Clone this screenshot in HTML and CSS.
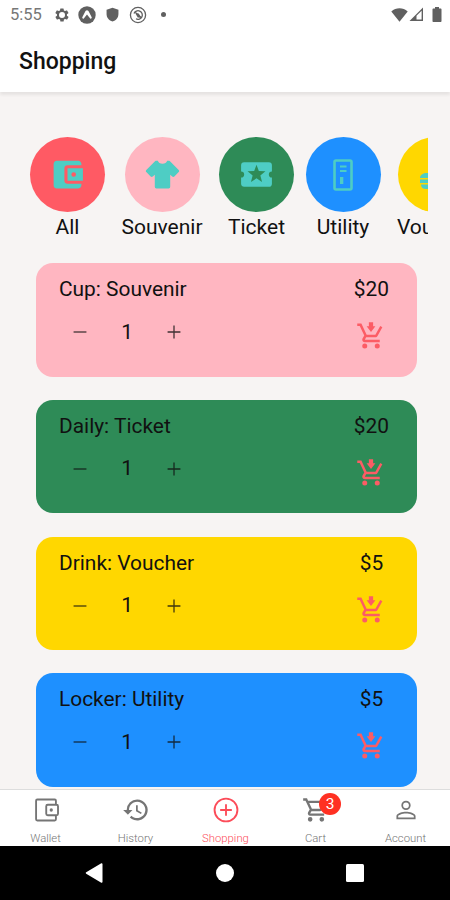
FILE: index.html
```html
<!DOCTYPE html>
<html lang="en">
<head>
    <meta charset="UTF-8">
    <meta name="viewport" content="width=device-width, initial-scale=1.0">
    <title>Shopping</title>
    <link rel="stylesheet" href="styles.css">
</head>
<body>

<svg class="symbols">
    <symbol id="cart-add" viewBox="0 0 24 24">
        <path d="M7 18a2 2 0 1 0 0 4 2 2 0 0 0 0-4zm10 0a2 2 0 1 0 0 4 2 2 0 0 0 0-4zM7.2 14.8v-.1l.9-1.7h7.4c.7 0 1.4-.4 1.700-1L21.1 5l-1.700-1-3.900 7h-7L4.300 2H1v2h2l3.600 7.600L5.200 14c-.1.300-.2.600-.2 1 0 1.100.9 2 2 2h12v-2H7.400c-.1 0-.2-.1-.2-.2zM10.300 1h3.400v3.200H15.500L12 8.700 8.500 4.200h1.800z"/>
    </symbol>
    <symbol id="minus" viewBox="0 0 24 24"><path d="M5 11.300h14v1.400H5z"/></symbol>
    <symbol id="plus" viewBox="0 0 24 24"><path d="M11.300 5h1.400v6.300H19v1.400h-6.300V19h-1.400v-6.300H5v-1.400h6.300z"/></symbol>
</svg>

<div class="screen">
    <div class="status">
        <span class="time">5:55</span>
        <svg class="gear" viewBox="0 0 24 24"><path d="M19.400 13a7.500 7.500 0 0 0 0-2l2.100-1.600c.2-.2.2-.4.1-.6l-2-3.500c-.1-.2-.4-.3-.6-.2l-2.500 1a7 7 0 0 0-1.700-1l-.4-2.600a.5.5 0 0 0-.5-.4h-4a.5.5 0 0 0-.5.4L9 5.100a7 7 0 0 0-1.700 1l-2.500-1c-.2-.1-.5 0-.6.200l-2 3.500c-.1.200-.1.400.1.600L4.500 11a8 8 0 0 0 0 2l-2.100 1.600c-.2.200-.2.400-.1.600l2 3.500c.1.200.4.300.6.200l2.500-1a7 7 0 0 0 1.700 1l.4 2.600c0 .2.200.4.500.4h4c.2 0 .5-.2.500-.4l.4-2.600a7 7 0 0 0 1.700-1l2.500 1c.2.100.5 0 .6-.2l2-3.500c.1-.2.1-.4-.1-.6zM12 16.500a4.500 4.500 0 1 1 0-9 4.500 4.500 0 0 1 0 9z"/></svg>
        <svg class="expo" viewBox="0 0 18 18"><circle cx="9" cy="9" r="8.700"/><path class="cut" d="M9 4.300c1 0 1.500.8 2 1.800l2.700 5.200c.3.800-.7 1.800-1.500 1.200L9 8.600l-3.200 3.900c-.8.600-1.800-.4-1.500-1.200L7 6.100c.5-1 1-1.800 2-1.800z"/></svg>
        <svg class="shield" viewBox="0 0 24 24"><path d="M12 1 2.500 4.500V11c0 6 4 10.600 9.500 12 5.500-1.400 9.500-6 9.500-12V4.500z"/></svg>
        <svg class="sync" viewBox="0 0 18 18"><circle class="ring" cx="9" cy="9" r="7.600"/><path class="ring" d="M5 7.500a4.300 4.300 0 1 1 2 5.300M6 6l6 5.500"/><path d="M6.500 7.500h3.300l2.400 4.300-3.500-.4z"/></svg>
        <span class="dot"></span>
        <svg class="wifi" viewBox="0 0 17 14"><path d="M.3 3.400C5-.7 12-.7 16.700 3.400L8.500 13.800z"/></svg>
        <svg class="signal" viewBox="0 0 15 15"><path d="M14 .5V14H.5z"/><path class="cut" d="M7.500 8.800 12.600 3.800v8.800H7.500z"/></svg>
        <svg class="battery" viewBox="0 0 10 15"><path d="M3 0h4v1.500h1.500c.6 0 1 .4 1 1V14c0 .6-.4 1-1 1h-7c-.6 0-1-.4-1-1V2.500c0-.6.4-1 1-1H3z"/></svg>
    </div>

    <header class="header">Shopping</header>

    <main class="content">
        <div class="categories">
            <div class="category">
                <div class="circle red"><svg viewBox="0 0 24 24"><path d="M21 18v1c0 1.100-.9 2-2 2H5a2 2 0 0 1-2-2V5c0-1.100.9-2 2-2h14c1.100 0 2 .9 2 2v1h-9a2 2 0 0 0-2 2v8c0 1.100.9 2 2 2zm-9-2h10V8H12zm4-2.500a1.500 1.500 0 1 1 0-3 1.500 1.500 0 0 1 0 3z"/></svg></div>
                <span>All</span>
            </div>
            <div class="category">
                <div class="circle pink"><svg viewBox="0 0 24 24"><path d="M16 21H8a1 1 0 0 1-1-1v-7.900l-1.300 1.200c-.4.400-1 .4-1.400 0L1.500 10.400c-.4-.4-.4-1 0-1.400L7.300 3.200c.2-.2.400-.2.700-.2h1c.3 1.200 1.500 2 3 2s2.700-.8 3-2h1c.3 0 .5 0 .7.200L22.500 9c.4.400.4 1 0 1.400l-2.800 2.900c-.4.400-1 .4-1.400 0L17 12.100V20a1 1 0 0 1-1 1z"/></svg></div>
                <span>Souvenir</span>
            </div>
            <div class="category">
                <div class="circle green"><svg viewBox="0 0 24 24"><path d="M20 12a2 2 0 0 1 2-2V6a2 2 0 0 0-2-2H4a2 2 0 0 0-2 2v4a2 2 0 0 1 0 4v4c0 1.100.9 2 2 2h16a2 2 0 0 0 2-2v-4a2 2 0 0 1-2-2zm-4.400 4.800L12 14.500l-3.600 2.300 1.100-4.200-3.300-2.700 4.300-.2L12 5.700l1.500 4 4.300.2-3.300 2.700z"/></svg></div>
                <span>Ticket</span>
            </div>
            <div class="category">
                <div class="circle blue"><svg class="locker" viewBox="0 0 20 32"><rect class="line" x="1.500" y="1.500" width="17" height="29" rx="1.500"/><path d="M7 6.500h6.500v2H7zM7 11h6.500v2H7zM7 18h3.300v7H7z"/></svg></div>
                <span>Utility</span>
            </div>
            <div class="category">
                <div class="circle yellow"><svg class="burger" viewBox="0 0 31 32"><path d="M0 19c0-3 3-5 7-5h17c4 0 7 2 7 5zM0 20.500h31v3.500H0zM1 25.500h29c0 3-2 4.500-5 4.500H6c-3 0-5-1.500-5-4.500z"/></svg></div>
                <span>Voucher</span>
            </div>
        </div>

        <div class="items">
            <div class="card pink">
                <div class="row"><span>Cup: Souvenir</span><span class="price">$20</span></div>
                <div class="row controls">
                    <div class="stepper"><svg><use href="#minus"/></svg><span>1</span><svg><use href="#plus"/></svg></div>
                    <svg class="add"><use href="#cart-add"/></svg>
                </div>
            </div>
            <div class="card green">
                <div class="row"><span>Daily: Ticket</span><span class="price">$20</span></div>
                <div class="row controls">
                    <div class="stepper"><svg><use href="#minus"/></svg><span>1</span><svg><use href="#plus"/></svg></div>
                    <svg class="add"><use href="#cart-add"/></svg>
                </div>
            </div>
            <div class="card yellow">
                <div class="row"><span>Drink: Voucher</span><span class="price">$5</span></div>
                <div class="row controls">
                    <div class="stepper"><svg><use href="#minus"/></svg><span>1</span><svg><use href="#plus"/></svg></div>
                    <svg class="add"><use href="#cart-add"/></svg>
                </div>
            </div>
            <div class="card blue">
                <div class="row"><span>Locker: Utility</span><span class="price">$5</span></div>
                <div class="row controls">
                    <div class="stepper"><svg><use href="#minus"/></svg><span>1</span><svg><use href="#plus"/></svg></div>
                    <svg class="add"><use href="#cart-add"/></svg>
                </div>
            </div>
        </div>
    </main>

    <nav class="tabs">
        <div class="tab">
            <svg viewBox="0 0 24 24"><path class="line" d="M20.500 7V4c0-.6-.4-1-1-1h-15c-.6 0-1 .4-1 1v16c0 .6.4 1 1 1h15c.6 0 1-.4 1-1v-3M13.500 7.500h7.500c.8 0 1.300.5 1.300 1.300v6.400c0 .8-.5 1.300-1.300 1.300h-7.500c-.8 0-1.300-.5-1.300-1.300V8.800c0-.8.5-1.300 1.300-1.300z"/><circle cx="16.500" cy="12" r="1.400"/></svg>
            <span>Wallet</span>
        </div>
        <div class="tab">
            <svg viewBox="0 0 24 24"><path d="M13 3a9 9 0 0 0-9 9H1l3.900 3.900.1.100L9 12H6a7 7 0 1 1 2.100 4.900l-1.400 1.500A9 9 0 1 0 13 3zm-1 5v5l4.200 2.500.8-1.200-3.500-2.100V8z"/></svg>
            <span>History</span>
        </div>
        <div class="tab active">
            <svg viewBox="0 0 24 24"><circle class="line" cx="12" cy="12" r="9.800"/><path class="line" d="M12 7v10M7 12h10"/></svg>
            <span>Shopping</span>
        </div>
        <div class="tab">
            <svg viewBox="0 0 24 24"><path d="M15.500 13c.8 0 1.400-.4 1.800-1l3.500-6.500A1 1 0 0 0 20 4H5.200l-.9-2H1v2h2l3.600 7.600L5.200 14c-.7 1.300.2 3 1.800 3h12v-2H7l1.100-2zM6.200 6h12.100l-2.800 5h-7zM7 18a2 2 0 1 0 0 4 2 2 0 0 0 0-4zm10 0a2 2 0 1 0 0 4 2 2 0 0 0 0-4z"/></svg>
            <span>Cart</span>
            <b class="badge">3</b>
        </div>
        <div class="tab">
            <svg viewBox="0 0 24 24"><path d="M12 5.500a2.500 2.500 0 1 1 0 5 2.500 2.500 0 0 1 0-5m0 9.500c3.300 0 6.700 1.500 6.700 2.300v1.200H5.300v-1.200c0-.8 3.400-2.300 6.700-2.300M12 4a4 4 0 1 0 0 8 4 4 0 0 0 0-8zm0 9.500c-2.700 0-8.200 1.200-8.200 3.800V20h16.400v-2.700c0-2.600-5.500-3.800-8.200-3.800z"/></svg>
            <span>Account</span>
        </div>
    </nav>

    <div class="navbar">
        <svg viewBox="0 0 20 20"><path d="M17.500 1v18c0 .7-.7 1-1.200.7L1.200 10.700c-.6-.4-.6-1 0-1.400L16.300.3c.5-.3 1.200 0 1.200.7z"/></svg>
        <svg viewBox="0 0 20 20"><circle cx="10" cy="10" r="9"/></svg>
        <svg viewBox="0 0 20 20"><rect x="1" y="1" width="18" height="18" rx="1.500"/></svg>
    </div>
</div>

</body>
</html>
```
FILE: styles.css
```css
* {
    box-sizing: border-box;
}
body {
    margin: 0;
    font-family: Roboto, sans-serif;
    color: #111;
}
svg {
    display: block;
    flex: none;
    fill: currentColor;
}
.symbols {
    display: none;
}
.screen {
    width: 450px;
    height: 900px;
    display: flex;
    flex-direction: column;
    overflow: hidden;
    background-color: #f7f4f3;
}
.status {
    height: 30px;
    flex: none;
    display: flex;
    align-items: center;
    padding: 0 8px 1px 10px;
    background-color: white;
    color: #606060;
}
.time {
    width: 44px;
    font-size: 16.5px;
    color: #777;
}
.gear {
    width: 16px;
    height: 16px;
}
.expo {
    width: 18px;
    height: 18px;
    margin-left: 8px;
}
.shield {
    width: 15px;
    height: 15px;
    margin-left: 9px;
}
.sync {
    width: 18px;
    height: 18px;
    margin-left: 9px;
}
.ring {
    fill: none;
    stroke: currentColor;
    stroke-width: 1.3;
}
.cut {
    fill: white;
}
.dot {
    width: 5px;
    height: 5px;
    margin-left: 14px;
    border-radius: 50%;
    background-color: #606060;
}
.wifi {
    width: 17px;
    height: 14px;
    margin-left: auto;
}
.signal {
    width: 15px;
    height: 15px;
    margin-left: 1px;
}
.battery {
    width: 10px;
    height: 15px;
    margin-left: 8px;
}
.header {
    height: 62px;
    flex: none;
    padding-left: 19px;
    line-height: 63px;
    font-size: 23px;
    font-weight: 500;
    background-color: white;
    box-shadow: 0 3px 3px rgba(0, 0, 0, 0.07);
}
.content {
    flex: 1;
    min-height: 0;
    padding-top: 45px;
    overflow: hidden;
}
.categories {
    display: grid;
    grid-template-columns: 94.5px 94.5px 86.5px 92.5px 75px;
    width: 398px;
    height: 112px;
    margin-left: 30px;
}
/* last category is cut at the right edge of the scroller */
.categories {
    clip-path: inset(0 0 0 -10px);
}
.category {
    width: 75px;
    display: flex;
    flex-direction: column;
    align-items: center;
    font-size: 21px;
    line-height: 31px;
}
.circle {
    width: 75px;
    height: 75px;
    flex: none;
    display: flex;
    align-items: center;
    justify-content: center;
    border-radius: 50%;
    color: #4ecdc4;
}
.circle svg {
    width: 37px;
    height: 37px;
}
.circle .locker {
    width: 20px;
    height: 32px;
}
.circle .burger {
    width: 31px;
    height: 32px;
}
.line {
    fill: none;
    stroke: currentColor;
    stroke-width: 2;
}
.locker .line {
    stroke-width: 2.6;
}
.red {
    background-color: #ff5a64;
}
.pink {
    background-color: #ffb6c1;
}
.green {
    background-color: #2e8b57;
}
.blue {
    background-color: #1e90ff;
}
.yellow {
    background-color: #ffd700;
}
.items {
    display: flex;
    flex-direction: column;
    gap: 23.3px;
    margin-top: 14px;
}
.card {
    width: 381px;
    height: 113.5px;
    flex: none;
    margin-left: 36px;
    padding: 11px 28px 0 23px;
    border-radius: 17px;
    font-size: 20.9px;
}
.row {
    display: flex;
    justify-content: space-between;
    line-height: 31px;
}
.price {
    min-width: 35px;
    text-align: center;
}
.controls {
    align-items: center;
    height: 30px;
    margin-top: 12px;
}
.stepper {
    display: flex;
    align-items: center;
    gap: 26px;
    padding-left: 10px;
}
.stepper svg {
    width: 22px;
    height: 22px;
    opacity: 0.8;
}
.stepper span {
    width: 20px;
    text-align: center;
}
.add {
    width: 30px;
    height: 30px;
    margin: 8px 3px 0 0;
    color: #fc5c65;
}
.tabs {
    height: 57px;
    flex: none;
    display: grid;
    grid-template-columns: repeat(5, 1fr);
    border-top: 1px solid #ddd;
    background-color: white;
}
.tab {
    position: relative;
    display: flex;
    flex-direction: column;
    align-items: center;
    padding: 6px 0 0 1px;
    font-size: 11.3px;
    line-height: 12px;
    color: #757575;
}
.tab svg {
    width: 28px;
    height: 28px;
}
.tab span {
    margin-top: 9px;
    font-weight: 300;
}
.tab .line {
    stroke-width: 1.6;
}
.active {
    color: #fc4c59;
}
.badge {
    position: absolute;
    top: 3px;
    left: 49px;
    width: 22px;
    height: 22px;
    border-radius: 50%;
    background-color: #ff3022;
    color: white;
    font-size: 15.5px;
    font-weight: 400;
    line-height: 22px;
    text-align: center;
}
.navbar {
    height: 54px;
    flex: none;
    display: flex;
    align-items: center;
    justify-content: center;
    gap: 110px;
    background-color: black;
    color: white;
}
.navbar svg {
    width: 20px;
    height: 20px;
}
```
